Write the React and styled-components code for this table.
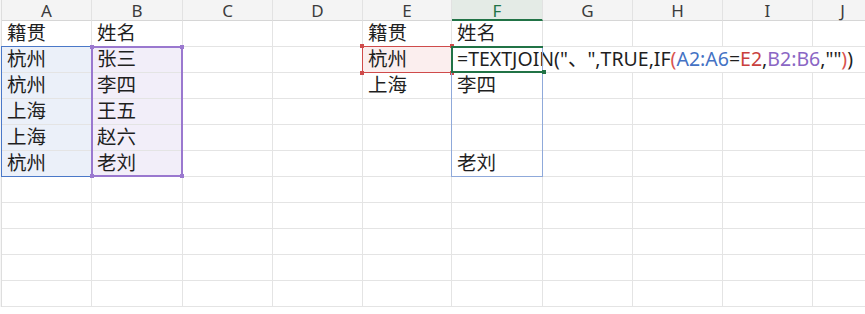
import React from "react";
import styled, { createGlobalStyle } from "styled-components";

const GlobalStyle = createGlobalStyle`
  html, body {
    margin: 0;
    padding: 0;
    background: #ffffff;
    overflow: hidden;
  }
`;

const columns = ["A", "B", "C", "D", "E", "F", "G", "H", "I", "J"];
const widths = [90, 91, 90, 90, 89, 91, 90, 90, 90, 60];
const ROWS = 11;

const data = {
  "1-0": "籍贯",
  "1-1": "姓名",
  "2-0": "杭州",
  "2-1": "张三",
  "3-0": "杭州",
  "3-1": "李四",
  "4-0": "上海",
  "4-1": "王五",
  "5-0": "上海",
  "5-1": "赵六",
  "6-0": "杭州",
  "6-1": "老刘",
  "1-4": "籍贯",
  "1-5": "姓名",
  "2-4": "杭州",
  "3-4": "上海",
  "3-5": "李四",
  "6-5": "老刘",
};

const fills = {
  0: "#ebf0f9",
  1: "#f2eef9",
};

const App = () => {
  const cells = [];
  for (let r = 1; r <= ROWS; r++) {
    for (let c = 0; c < columns.length; c++) {
      if (r === 2 && c > 5) continue;
      const key = `${r}-${c}`;
      let fill;
      if (r >= 2 && r <= 6 && fills[c]) fill = fills[c];
      if (r === 2 && c === 4) fill = "#fbeeee";
      if (r === 2 && c === 5) {
        cells.push(
          <FormulaCell key={key}>
            =TEXTJOIN("、",TRUE,IF<Ref $color="#d9534f">(</Ref>
            <Ref $color="#4472c4">A2:A6</Ref>=<Ref $color="#c9403d">E2</Ref>,
            <Ref $color="#8a66c4">B2:B6</Ref>,""<Ref $color="#d9534f">)</Ref>)
          </FormulaCell>
        );
        continue;
      }
      cells.push(
        <Cell key={key} $row={r} $col={c + 2} $fill={fill}>
          {data[key]}
        </Cell>
      );
    }
  }

  return (
    <>
      <GlobalStyle />
      <Sheet $widths={widths}>
        <Gutter />
        {columns.map((name, i) => (
          <ColHeader key={name} $col={i + 2} $active={name === "F"}>
            {name}
          </ColHeader>
        ))}
        {cells}

        <Range $cols="2 / 3" $rows="3 / 8" $color="#4a78c8" $width={1} />
        <Range $cols="3 / 4" $rows="3 / 8" $color="#9a78cf" $width={2}>
          <Handle $top /><Handle $top $right /><Handle /><Handle $right />
        </Range>
        <Range $cols="6 / 7" $rows="3 / 4" $color="#cf4b4b" $width={1}>
          <Handle $top /><Handle $top $right /><Handle /><Handle $right />
        </Range>
        <Range $cols="7 / 8" $rows="3 / 8" $color="#8fa9da" $width={1} />
        <Range $cols="7 / 8" $rows="3 / 4" $color="#217346" $width={2} $open>
          <Handle $right $green />
        </Range>
      </Sheet>
    </>
  );
};

export default App;

const Sheet = styled.div`
  display: grid;
  grid-template-columns: 2px ${(p) => p.$widths.map((w) => `${w}px`).join(" ")};
  grid-template-rows: 21px repeat(${ROWS}, 26px);
  font-family: "Noto Sans", "Noto Sans CJK SC", sans-serif;
  color: #1f1f1f;
  background: #ffffff;
  width: 865px;
  overflow: hidden;
`;

const Gutter = styled.div`
  grid-column: 1;
  grid-row: 1 / -1;
  background: #f6f6f6;
  border-right: 1px solid #dedede;
`;

const ColHeader = styled.div`
  grid-row: 1;
  grid-column: ${(p) => p.$col};
  display: flex;
  align-items: center;
  justify-content: center;
  box-sizing: border-box;
  background: ${(p) => (p.$active ? "#e4ebe6" : "#f4f4f4")};
  color: ${(p) => (p.$active ? "#217346" : "#3c3c3c")};
  border-right: 1px solid #e2e2e2;
  border-bottom: ${(p) => (p.$active ? "2px solid #217346" : "1px solid #d6d6d6")};
  font-size: 17px;
  line-height: 1;
  padding-top: 1px;
`;

const Cell = styled.div`
  grid-row: ${(p) => p.$row + 1};
  grid-column: ${(p) => p.$col};
  box-sizing: border-box;
  background: ${(p) => p.$fill || "transparent"};
  border-right: 1px solid #e4e4e4;
  border-bottom: 1px solid #e4e4e4;
  display: flex;
  align-items: flex-end;
  padding: 0 0 1px 5px;
  font-size: 19.5px;
  line-height: 24px;
  white-space: nowrap;
`;

const FormulaCell = styled.div`
  grid-row: 3;
  grid-column: 7 / -1;
  box-sizing: border-box;
  border-bottom: 1px solid #e4e4e4;
  display: flex;
  align-items: flex-end;
  padding: 0 0 1px 5px;
  font-size: 19.5px;
  line-height: 24px;
  white-space: pre;
`;

const Ref = styled.span`
  color: ${(p) => p.$color};
`;

const Range = styled.div`
  grid-column: ${(p) => p.$cols};
  grid-row: ${(p) => p.$rows};
  position: relative;
  box-sizing: border-box;
  border: ${(p) => p.$width}px solid ${(p) => p.$color};
  ${(p) => p.$open && "border-right: none;"}
  margin: -1px 0 0 -1px;
  pointer-events: none;
  color: ${(p) => p.$color};
`;

const Handle = styled.span`
  position: absolute;
  width: 4px;
  height: 4px;
  background: ${(p) => (p.$green ? "#217346" : "currentColor")};
  ${(p) => (p.$top ? "top: -3px;" : "bottom: -3px;")}
  ${(p) => (p.$right ? "right: -3px;" : "left: -3px;")}
`;
